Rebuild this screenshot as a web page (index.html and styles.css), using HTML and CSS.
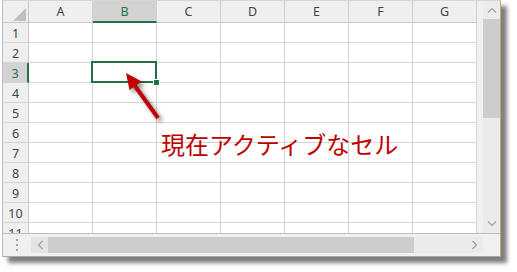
FILE: index.html
```html
<!DOCTYPE html>
<html lang="ja">

<head>
  <meta charset="UTF-8">
  <title>アクティブセル</title>
  <link rel="stylesheet" href="styles.css">
</head>

<body>
  <div class="screen">
    <div class="excelWindow">
      <div class="mainArea">
        <div class="sheet">
          <div class="corner"><span class="cornerMark"></span></div>
          <div class="colHead">A</div>
          <div class="colHead selected">B</div>
          <div class="colHead">C</div>
          <div class="colHead">D</div>
          <div class="colHead">E</div>
          <div class="colHead">F</div>
          <div class="colHead">G</div>

          <div class="rowHead">1</div><div class="cell"></div><div class="cell"></div><div class="cell"></div><div class="cell"></div><div class="cell"></div><div class="cell"></div><div class="cell"></div>
          <div class="rowHead">2</div><div class="cell"></div><div class="cell"></div><div class="cell"></div><div class="cell"></div><div class="cell"></div><div class="cell"></div><div class="cell"></div>
          <div class="rowHead selected">3</div><div class="cell"></div><div class="cell active"><span class="fillHandle"></span></div><div class="cell"></div><div class="cell"></div><div class="cell"></div><div class="cell"></div><div class="cell"></div>
          <div class="rowHead">4</div><div class="cell"></div><div class="cell"></div><div class="cell"></div><div class="cell"></div><div class="cell"></div><div class="cell"></div><div class="cell"></div>
          <div class="rowHead">5</div><div class="cell"></div><div class="cell"></div><div class="cell"></div><div class="cell"></div><div class="cell"></div><div class="cell"></div><div class="cell"></div>
          <div class="rowHead">6</div><div class="cell"></div><div class="cell"></div><div class="cell"></div><div class="cell"></div><div class="cell"></div><div class="cell"></div><div class="cell"></div>
          <div class="rowHead">7</div><div class="cell"></div><div class="cell"></div><div class="cell"></div><div class="cell"></div><div class="cell"></div><div class="cell"></div><div class="cell"></div>
          <div class="rowHead">8</div><div class="cell"></div><div class="cell"></div><div class="cell"></div><div class="cell"></div><div class="cell"></div><div class="cell"></div><div class="cell"></div>
          <div class="rowHead">9</div><div class="cell"></div><div class="cell"></div><div class="cell"></div><div class="cell"></div><div class="cell"></div><div class="cell"></div><div class="cell"></div>
          <div class="rowHead">10</div><div class="cell"></div><div class="cell"></div><div class="cell"></div><div class="cell"></div><div class="cell"></div><div class="cell"></div><div class="cell"></div>
          <div class="rowHead">11</div><div class="cell"></div><div class="cell"></div><div class="cell"></div><div class="cell"></div><div class="cell"></div><div class="cell"></div><div class="cell"></div>
        </div>

        <div class="vScroll">
          <div class="vBar">
            <div class="arrowBtn">
              <svg width="10" height="6" viewBox="0 0 10 6"><polyline points="1,5.5 5,1.5 9,5.5" /></svg>
            </div>
            <div class="vThumb"></div>
            <div class="vTrack"></div>
            <div class="arrowBtn">
              <svg width="10" height="6" viewBox="0 0 10 6"><polyline points="1,0.5 5,4.5 9,0.5" /></svg>
            </div>
          </div>
        </div>
      </div>

      <div class="hScroll">
        <div class="tabDots"><span></span><span></span><span></span></div>
        <div class="hBtn dark">
          <svg width="6" height="10" viewBox="0 0 6 10"><polyline points="5.5,1 1.5,5 5.5,9" /></svg>
        </div>
        <div class="hThumb"></div>
        <div class="hTrack"></div>
        <div class="hBtn">
          <svg width="6" height="10" viewBox="0 0 6 10"><polyline points="0.5,1 4.5,5 0.5,9" /></svg>
        </div>
        <div class="scrollCorner"></div>
      </div>
    </div>

    <!-- 矢印と説明 -->
    <svg class="pointer" width="517" height="272" viewBox="0 0 517 272">
      <line x1="158" y1="118" x2="135" y2="86" />
      <polygon points="126,73 141.5,81.5 129.5,90" />
    </svg>
    <div class="callout">現在アクティブなセル</div>
  </div>
</body>

</html>
```

FILE: styles.css
```css
* {
  margin: 0;
  padding: 0;
  box-sizing: border-box;
}

html,
body {
  width: 517px;
  height: 272px;
  background: #fff;
  overflow: hidden;
}

.screen {
  position: relative;
  width: 517px;
  height: 272px;
  padding-left: 2px;
  font-family: 'Noto Sans', 'Liberation Sans', sans-serif;
}

.excelWindow {
  display: flex;
  flex-direction: column;
  width: 499px;
  height: 257px;
  border: 1px solid #d6d6d6;
  border-left-color: #bcbcbc;
  border-right-color: #c7a56c;
  border-bottom-color: #a8a8a8;
  background: #fff;
  box-shadow: 6px 6px 4px rgba(0, 0, 0, .5);
}

.mainArea {
  display: flex;
  height: 232px;
}

.sheet {
  display: grid;
  grid-template-columns: 26px repeat(7, 64px);
  grid-template-rows: 22px;
  grid-auto-rows: 20px;
  width: 474px;
  height: 232px;
  overflow: hidden;
}

.sheet .corner,
.sheet .colHead,
.sheet .rowHead {
  display: flex;
  align-items: center;
  justify-content: center;
  background: #efefef;
  color: #444;
  font-size: 12.5px;
  border-right: 1px solid #d0d0d0;
  border-bottom: 1px solid #c8c8c8;
}

.sheet .rowHead {
  border-right-color: #c8c8c8;
  border-bottom-color: #d4d4d4;
  padding-top: 1px;
}

.sheet .corner {
  position: relative;
  border-right-color: #c8c8c8;
}

.sheet .corner .cornerMark {
  position: absolute;
  right: 2px;
  bottom: 1px;
  width: 13px;
  height: 13px;
  background: #c0c0c0;
  clip-path: polygon(100% 0, 100% 100%, 0 100%);
}

.sheet .colHead.selected {
  background: #d3d3d3;
  color: #217346;
  border-bottom: 2px solid #217346;
  padding-top: 1px;
}

.sheet .rowHead.selected {
  background: #d3d3d3;
  color: #217346;
  border-right: 2px solid #217346;
}

.sheet .cell {
  border-right: 1px solid #d4d4d4;
  border-bottom: 1px solid #d4d4d4;
}

.sheet .cell.active {
  position: relative;
}

.sheet .cell.active:before {
  content: '';
  position: absolute;
  left: -2px;
  top: -2px;
  right: -1px;
  bottom: -1px;
  border: 2px solid #217346;
}

.sheet .cell.active .fillHandle {
  position: absolute;
  right: -4px;
  bottom: -4px;
  width: 7px;
  height: 7px;
  background: #217346;
  border: 1px solid #fff;
  z-index: 1;
}

.vScroll {
  width: 23px;
  padding-left: 6px;
  background: #f0f0f0;
}

.vScroll .vBar {
  display: flex;
  flex-direction: column;
  height: 100%;
  background: #ebebeb;
}

.arrowBtn {
  display: flex;
  align-items: center;
  justify-content: center;
  height: 18px;
}

.arrowBtn svg polyline,
.hBtn svg polyline {
  fill: none;
  stroke: #a0a0a0;
  stroke-width: 1.2;
}

.vScroll .vThumb {
  height: 99px;
  background: #cdcdcd;
}

.vScroll .vTrack {
  flex: 1;
}

.hScroll {
  display: flex;
  height: 23px;
  padding: 3px 0 3px;
  border-top: 1px solid #bdbdbd;
  background: #f0f0f0;
}

.hScroll .tabDots {
  display: flex;
  flex-direction: column;
  align-items: center;
  justify-content: center;
  gap: 3px;
  width: 28px;
}

.hScroll .tabDots span {
  width: 2px;
  height: 2px;
  background: #a6a6a6;
}

.hScroll .hBtn {
  display: flex;
  align-items: center;
  justify-content: center;
  width: 17px;
  background: #ebebeb;
}

.hScroll .hBtn.dark {
  background: #e4e4e4;
}

.hScroll .hThumb {
  width: 366px;
  background: #cdcdcd;
}

.hScroll .hTrack {
  width: 52px;
  background: #ebebeb;
}

.hScroll .scrollCorner {
  flex: 1;
}

.pointer {
  position: absolute;
  left: 0;
  top: 0;
  filter: drop-shadow(3px 3px 2px rgba(0, 0, 0, .45));
}

.pointer line {
  stroke: #c00000;
  stroke-width: 4;
}

.pointer polygon {
  fill: #c00000;
}

.callout {
  position: absolute;
  left: 161px;
  top: 132px;
  color: #c00000;
  font-family: 'Noto Sans CJK JP', sans-serif;
  font-size: 24px;
  line-height: 24px;
  white-space: nowrap;
}
```
